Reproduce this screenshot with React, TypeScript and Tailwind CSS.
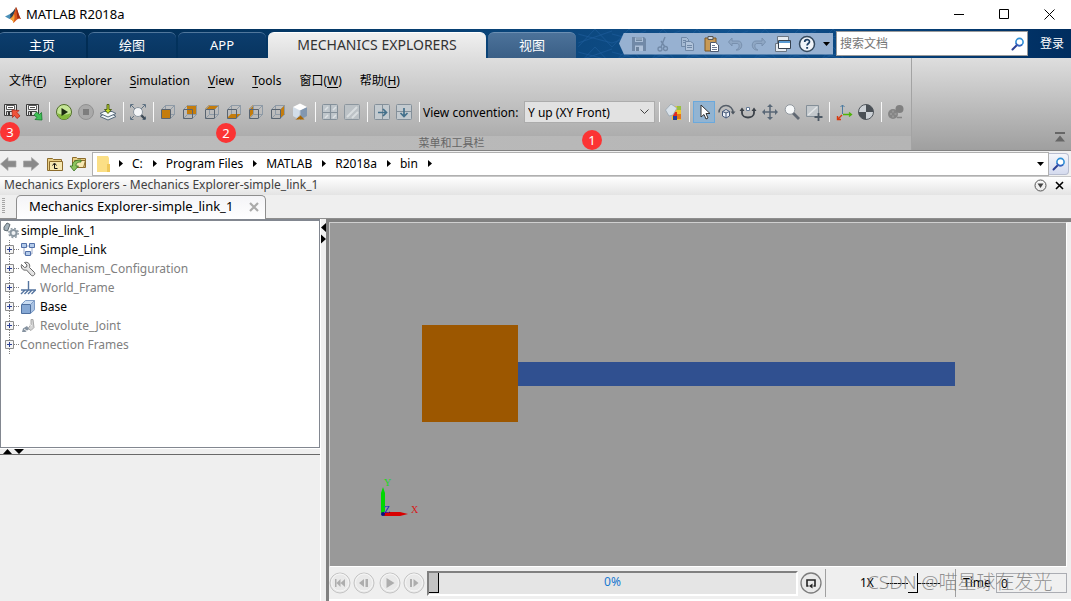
import React from "react";

type IconProps = { children: React.ReactNode; size?: number; className?: string };

function Icon({ children, size = 22, className = "" }: IconProps) {
  return (
    <svg width={size} height={size} viewBox={`0 0 ${size} ${size}`} fill="none" className={"block shrink-0 " + className} aria-hidden="true">
      {children}
    </svg>
  );
}

function Tool({ label, children, active = false, disabled = false }: { label: string; children: React.ReactNode; active?: boolean; disabled?: boolean }) {
  return (
    <button
      type="button"
      aria-label={label}
      disabled={disabled}
      className={"flex size-[22px] shrink-0 items-center justify-center " + (active ? "bg-[#92b4d2] outline outline-1 -outline-offset-1 outline-[#6ba9dc]" : "")}
    >
      <Icon>{children}</Icon>
    </button>
  );
}

function Sep() {
  return (
    <span className="flex h-5 w-2 shrink-0 justify-center">
      <span className="w-px bg-[#f8f8f8]" />
    </span>
  );
}

function Floppy() {
  return (
    <>
      <path d="M3.500 3.500h12v11h-12z" fill="#e9e9e9" stroke="#3c3c3c" />
      <path d="M5.500 4.500h8v4h-8z" fill="#fff" stroke="#555" />
      <path d="M7 6.500h5" stroke="#555" />
      <path d="M5.500 10.500h8v4h-8z" fill="#ddd" stroke="#444" />
      <path d="M7 11h2v3H7z" fill="#333" />
    </>
  );
}

const faces: { label: string; d: string }[] = [
  { label: "Front view", d: "M4 8h9v9H4z" },
  { label: "Back view", d: "M8 4h10v9H8z" },
  { label: "Top view", d: "M4 8l4-4h10l-4 4z" },
  { label: "Bottom view", d: "M4 17l4-4h10l-4 4z" },
  { label: "Left view", d: "M4 8l4-4v9l-4 4z" },
  { label: "Right view", d: "M14 8l4-4v9l-4 4z" },
];

function CubeFace({ d }: { d: string }) {
  return (
    <>
      <path d="M8.500 4.500h9v9h-9zM4.500 17.500l4-4M4.500 8.500l4-4M13.500 8.500l4-4M13.500 17.500l4-4" stroke="#8e9aa6" />
      <path d={d} fill="#c47c0c" />
      <path d="M4.500 8.500h9v9h-9z" stroke="#596470" />
      <path d="M4.500 8.500l4-4h9v9l-4 4" stroke="#8e9aa6" />
    </>
  );
}

function Magnifier() {
  return (
    <Icon size={14}>
      <path d="M6 8L1.500 12.500" stroke="#2b3f94" strokeWidth="2" strokeLinecap="round" />
      <circle cx="8.500" cy="5" r="3.600" fill="#fff" stroke="#2f8fd6" strokeWidth="1.600" />
      <path d="M5 6.200a3.600 3.600 0 0 0 6 1.500" stroke="#3b60bd" strokeWidth="1.600" />
    </Icon>
  );
}

function Menu({ text, hot, tail = "" }: { text?: string; hot: string; tail?: string }) {
  return (
    <button type="button" className="whitespace-nowrap">
      {text}
      <span className="underline underline-offset-2">{hot}</span>
      {tail}
    </button>
  );
}

function Badge({ n, className }: { n: number; className: string }) {
  return (
    <span className={"absolute flex size-5 items-center justify-center rounded-full bg-[#fb3434] text-[13px] leading-none text-white " + className}>{n}</span>
  );
}

function RibbonTab({ children, className }: { children: React.ReactNode; className: string }) {
  return (
    <button type="button" className={"h-[26px] rounded-t-md border-t pb-0.5 leading-5 " + className}>
      {children}
    </button>
  );
}

function TitleBar() {
  return (
    <header className="flex h-[29px] shrink-0 items-center bg-white text-[13px]">
      <svg width="18" height="18" viewBox="0 0 18 18" className="ml-1 block" aria-hidden="true">
        <path d="M1 10.500L6 8l2.500 2.500L5.500 13z" fill="#4a90b8" />
        <path d="M6 8l3-2.500L12 1l-2 9-4.500 3 1-2z" fill="#26445e" />
        <path d="M12 1c1.500 2 2.500 8 5 12-2-1-3-.5-4.500 1L9.500 17C9 14.500 8 13.500 6 13c3-2 4.500-7 6-12z" fill="#d8561c" />
        <path d="M12 1c1.500 2 2.500 8 5 12-1.500-1-2.500-.8-3.500 0C13 9 12.500 5 12 1z" fill="#9e2a14" />
        <path d="M10 8c1 2 .5 5-.5 9-.3-2-1.500-3.500-3.500-4 2-1 3-3 4-5z" fill="#f2a53c" />
      </svg>
      <h1 className="ml-1 flex-1">MATLAB R2018a</h1>
      <button type="button" aria-label="Minimize" className="flex w-[45px] justify-center">
        <svg width="11" height="11" viewBox="0 0 11 11"><path d="M0 5.500h10" stroke="#000" /></svg>
      </button>
      <button type="button" aria-label="Maximize" className="flex w-[45px] justify-center">
        <svg width="11" height="11" viewBox="0 0 11 11"><path d="M.5.5h9v9h-9z" stroke="#000" fill="none" /></svg>
      </button>
      <button type="button" aria-label="Close" className="-mr-px flex w-[45px] justify-center">
        <svg width="11" height="11" viewBox="0 0 11 11"><path d="M.5.5l10 10M10.500.5l-10 10" stroke="#000" /></svg>
      </button>
    </header>
  );
}

function QuickAccess() {
  return (
    <div className="flex h-[22px] items-center bg-[#97b1d1] pl-[9px] [clip-path:polygon(5px_0,100%_0,100%_100%,5px_100%,0_50%)]">
      <button type="button" aria-label="Save" className="w-6">
        <Icon>
          <path d="M4 4h12l2 2v12H4z" fill="#7189a7" />
          <path d="M7 4.500h8V9H7z" fill="#a9bdd6" /><path d="M8 6h6M8 7.500h6" stroke="#71879f" />
          <path d="M7 12.500h8V18H7z" fill="#adc0d8" /><path d="M8 14h3v4H8z" fill="#6d839d" />
        </Icon>
      </button>
      <button type="button" aria-label="Cut" className="w-6">
        <Icon>
          <path d="M13 4l-4 10M9 8l4 6" stroke="#7189a7" strokeWidth="1.400" />
          <circle cx="8" cy="16" r="2" stroke="#7189a7" strokeWidth="1.300" /><circle cx="13.500" cy="15.500" r="2" stroke="#7189a7" strokeWidth="1.300" />
        </Icon>
      </button>
      <button type="button" aria-label="Copy" className="w-6">
        <Icon>
          <path d="M5.500 4.500h5l2 2v7h-7z" fill="#a5bad3" stroke="#7189a7" /><path d="M9.500 8.500h5l3 2v7h-8z" fill="#b1c4db" stroke="#7189a7" />
          <path d="M11 12.500h5M11 14.500h5M7 7.500h3M7 9.500h2" stroke="#7189a7" />
        </Icon>
      </button>
      <button type="button" aria-label="Paste" className="w-6">
        <Icon>
          <path d="M5 5h11v13H5z" fill="#c99a55" stroke="#7a5626" /><path d="M8 3.500h5v3H8z" fill="#d7dbe0" stroke="#555" />
          <path d="M10.500 9.500h5l3 2.500v6.500h-8z" fill="#fff" stroke="#4d5a70" /><path d="M12 12.500h3M12 14.500h5M12 16.500h5" stroke="#6a7890" />
        </Icon>
      </button>
      <button type="button" aria-label="Undo" className="w-6">
        <Icon><path d="M8 5L4.500 9 8 13v-2.500h5c3 0 3 5.500-1 6.500h2c5-1 5-9 0-9H8z" fill="#8fa7c4" stroke="#7890ae" /></Icon>
      </button>
      <button type="button" aria-label="Redo" className="w-6">
        <Icon><path d="M14 5l3.500 4L14 13v-2.500H9c-3 0-3 5.500 1 6.500H8c-5-1-5-9 0-9h6z" fill="#8fa7c4" stroke="#7890ae" /></Icon>
      </button>
      <button type="button" aria-label="Switch windows" className="w-6">
        <Icon>
          <path d="M5.500 3.500h11v8h-11z" fill="#e6ebf1" stroke="#6b7683" />
          <path d="M3.500 10.500h11v8h-11z" fill="#e6ebf1" stroke="#6b7683" />
          <path d="M6.500 7.500h12v8h-12z" fill="#fff" stroke="#364250" /><path d="M7 8h11v2H7z" fill="#5a9ad2" />
        </Icon>
      </button>
      <button type="button" aria-label="Help" className="w-6">
        <Icon>
          <circle cx="11" cy="11" r="7.500" fill="#f0f4f9" stroke="#34495e" strokeWidth="1.500" />
          <path d="M8.700 9c0-3 4.800-3 4.800-.3 0 1.800-2.400 1.800-2.400 3.800" stroke="#1e3f63" strokeWidth="1.700" /><path d="M10.200 14h1.900v1.800h-1.900z" fill="#1e3f63" />
        </Icon>
      </button>
      <button type="button" aria-label="Customize" className="flex w-[13px] justify-center">
        <svg width="7" height="4" viewBox="0 0 7 4"><path d="M0 0h7L3.500 4z" fill="#000" /></svg>
      </button>
    </div>
  );
}

function Ribbon() {
  const dark = "w-[88px] border-[#51779c] bg-linear-to-b from-[#0c3d6d] to-[#083560] text-white";
  return (
    <nav className="relative flex h-[29px] shrink-0 items-end bg-linear-to-r from-[#00284d] via-[#11528f] via-70% to-[#002d5f]">
      <svg className="absolute inset-0 size-full" aria-hidden="true">
        <defs>
          <pattern id="mesh" width="34" height="18" patternUnits="userSpaceOnUse">
            <path d="M0 18L17 0l17 18M0 5l34 9M0 14L34 2" stroke="#1b5a9a" strokeWidth=".7" fill="none" />
          </pattern>
        </defs>
        <rect x="54%" width="25%" height="29" fill="url(#mesh)" />
      </svg>
      <div className="relative -ml-0.5 flex flex-1 items-end gap-0.5">
        <RibbonTab className={"text-[13px] " + dark}>主页</RibbonTab>
        <RibbonTab className={"text-[13px] " + dark}>绘图</RibbonTab>
        <RibbonTab className={"text-[13px] " + dark}>APP</RibbonTab>
        <RibbonTab className="w-[218px] border-white bg-linear-to-b from-[#f0f0f0] to-[#dedede] text-sm text-[#333]">MECHANICS EXPLORERS</RibbonTab>
        <RibbonTab className="w-[88px] border-[#6c8fb3] bg-linear-to-b from-[#4c729a] to-[#3a5f86] text-[13px] text-white">视图</RibbonTab>
      </div>
      <div className="relative flex h-full items-center gap-[3px]">
        <QuickAccess />
        <div className="flex h-[25px] w-48 items-center border border-[#9b9b9b] bg-white pr-0.5">
          <input type="search" aria-label="搜索文档" placeholder="搜索文档" className="w-full min-w-0 flex-1 bg-transparent pl-[3px] text-xs outline-none placeholder:text-[#757575]" />
          <button type="button" aria-label="搜索"><Magnifier /></button>
        </div>
        <button type="button" className="w-10 pl-0.5 text-xs text-white">登录</button>
      </div>
    </nav>
  );
}

function Toolbar() {
  return (
    <div className="flex h-[22px] items-center pl-px">
      <Tool label="Save configuration">
        <Floppy /><path d="M11 9l7 .5-2 2 3 3.500-3 2.500-2.500-3-2 2z" fill="#f0543a" stroke="#b3281a" strokeWidth=".8" />
      </Tool>
      <Tool label="Load configuration">
        <Floppy /><path d="M19 19l-7-.5 2-2-3-2.500 2.500-3 3 2.500 2-2z" fill="#3fbf55" stroke="#187a2c" strokeWidth=".8" />
      </Tool>
      <Sep />
      <Tool label="Run">
        <circle cx="11" cy="11" r="7.500" fill="#c5e596" stroke="#4f6d2a" /><path d="M4.500 12a6.500 6.500 0 0 0 13 0c-3 2-10 2-13 0z" fill="#83b93b" /><path d="M8.500 7l6.500 4-6.500 4z" fill="#1c2a10" />
      </Tool>
      <Tool label="Stop" disabled><circle cx="11" cy="11" r="7.500" fill="#a9a9a9" stroke="#919191" /><path d="M8 8h6v6H8z" fill="#7d7d7d" /></Tool>
      <Tool label="Update diagram">
        <path d="M3 15.500l3-2h10l3 2-8 3.500z" fill="#edf3f6" stroke="#56697a" /><path d="M3 12.500l4-2h8l4 2-8 3.500z" fill="#f5f9fb" stroke="#56697a" />
        <path d="M10 3.500h2v5h2.500L11 12.500 7.500 8.500H10z" fill="#c4da27" stroke="#50651a" />
      </Tool>
      <Sep />
      <Tool label="Fit to view">
        <path d="M3.500 6.500v-3h3M15.500 3.500h3v3M3.500 15.500v3h3M18.500 15.500v3h-3M4 4l4 4M18 4l-4 4M4 18l3-3" stroke="#5f7283" />
        <path d="M14 14l4 4" stroke="#3d4a55" strokeWidth="2.400" /><circle cx="11" cy="11" r="4.500" fill="#f4f6f8" stroke="#8b959e" />
      </Tool>
      <Sep />
      {faces.map((f) => (
        <Tool key={f.label} label={f.label}><CubeFace d={f.d} /></Tool>
      ))}
      <Tool label="Isometric view">
        <path d="M4 6l7 3v10l-7-4z" fill="#d2dde8" /><path d="M18 6l-7 3v10l7-4z" fill="#8297b0" /><path d="M4 6l7-3.500L18 6l-7 3.500z" fill="#fff" /><path d="M11 14l4.500 4.500h-9z" fill="#a86705" /><path d="M11 9.500v5l-4 3" stroke="#b9c6d4" />
      </Tool>
      <Sep />
      <Tool label="Four views"><rect x="3.500" y="3.500" width="15" height="15" rx="1" fill="#bfc6cb" stroke="#84909a" /><path d="M11.500 4v14M4 11.500h14" stroke="#84909a" strokeWidth="1.200" /><path d="M6 9l3-3M6 17l3-3M14 9l3-3M14 17l3-3" stroke="#dde2e5" strokeWidth="1.500" /></Tool>
      <Tool label="Single view"><rect x="3.500" y="3.500" width="15" height="15" rx="1" fill="#bcc2c6" stroke="#8c969e" /><path d="M6 16L16 6M11 17l6-6" stroke="#d8dddf" strokeWidth="2" /></Tool>
      <Sep />
      <Tool label="Split vertically"><rect x="3.500" y="3.500" width="15" height="15" rx="1" fill="#c3cacf" stroke="#84909a" /><path d="M11.500 4v14" stroke="#84909a" /><path d="M7 11.500h8M12 8l3.500 3.500L12 15" stroke="#43708b" strokeWidth="1.700" /></Tool>
      <Tool label="Split horizontally"><rect x="3.500" y="3.500" width="15" height="15" rx="1" fill="#c3cacf" stroke="#84909a" /><path d="M4 10.500h14" stroke="#84909a" /><path d="M11 7v8M7.500 12l3.500 3.500 3.500-3.500" stroke="#43708b" strokeWidth="1.700" /></Tool>
      <Sep />
      <label htmlFor="convention" className="w-[101px] pt-0.5 whitespace-nowrap">View convention:</label>
      <div className="relative h-[22px] w-[131px]">
        <select id="convention" defaultValue="y" className="h-full w-full appearance-none border border-[#acacac] bg-[#e2e2e2] pt-0.5 pl-[3px] text-xs">
          <option value="y">Y up (XY Front)</option>
          <option value="z">Z up (XY Top)</option>
        </select>
        <svg width="9" height="6" viewBox="0 0 9 6" className="pointer-events-none absolute top-2 right-1.5" aria-hidden="true"><path d="M.5.5l4 4 4-4" stroke="#404040" fill="none" /></svg>
      </div>
      <Sep />
      <Tool label="Background color">
        <path d="M12 5h6v14h-9v-6z" fill="#f0c530" /><path d="M14 5h4v4h-4z" fill="#9ac13c" /><path d="M10 11h4v4h-4z" fill="#e42b21" /><path d="M14 13h4v5h-4z" fill="#e5761a" /><path d="M10 15h4v4h-4z" fill="#263d9a" />
        <path d="M2.500 9L8 3l6 4-4 7-4 1z" fill="#d8e1e9" stroke="#98a4af" strokeWidth=".8" />
      </Tool>
      <Sep />
      <Tool label="Select" active><path d="M8 4v12l3-2.500 2 4.500 2-1-2-4.500h4z" fill="#fff" stroke="#333" /></Tool>
      <Tool label="Rotate">
        <path d="M4 11.500a7 7 0 0 1 14 0" stroke="#555e68" strokeWidth="1.500" /><path d="M15.500 10.500h5l-2.500 3z" fill="#4d5660" /><path d="M7.500 10.500l3.500-2 3.500 2v4.500L11 17l-3.500-2zM7.500 10.500L11 12l3.500-1.500M11 12v5" fill="#eef2f8" stroke="#44587a" />
      </Tool>
      <Tool label="Roll"><path d="M5 9v3c0 6 12 6 12 0V9" stroke="#3c4249" strokeWidth="1.800" /><path d="M2.500 10L5 6.500 7.500 10zM14.500 10L17 6.500l2.500 3.500z" fill="#3c4249" /><path d="M9.500 6.500h3v3h-3z" fill="#fff" stroke="#667b96" /></Tool>
      <Tool label="Pan"><path d="M11 4v14M4 11h14" stroke="#596776" strokeWidth="1.500" /><path d="M11 3L8 6h6zM11 19L8 16h6zM3 11l3-3v6zM19 11l-3-3v6z" fill="#596776" /></Tool>
      <Tool label="Zoom"><path d="M12 12l6 6" stroke="#606872" strokeWidth="2.800" /><circle cx="9" cy="8.500" r="4.800" fill="#f7f9fa" stroke="#90979e" /></Tool>
      <Tool label="Zoom region"><path d="M3.500 4.500h12v11h-12z" fill="#c4c9cd" stroke="#848f98" /><path d="M5 14l9-8" stroke="#e2e5e7" strokeWidth="1.500" /><path d="M15.500 12v8M11.500 16h8" stroke="#4d5965" strokeWidth="1.800" /></Tool>
      <Sep />
      <Tool label="Show frames"><path d="M9.500 13V4M7.500 6l2-2 2 2" stroke="#4d7ba0" /><path d="M10 13.500h8M16 11.500l2.500 2-2.500 2" stroke="#4eb20a" strokeWidth="1.300" /><path d="M9 14l-4 4M4.500 15v3.500H8" stroke="#d63a10" strokeWidth="1.400" /></Tool>
      <Tool label="Show centers of mass"><circle cx="11" cy="11" r="7.500" fill="#ccd1d6" stroke="#50565c" /><path d="M11 11V3.500A7.500 7.500 0 0 1 18.500 11zM11 11H3.500A7.500 7.500 0 0 0 11 18.500z" fill="#4a5056" /></Tool>
      <Sep />
      <Tool label="Record video" disabled><circle cx="8" cy="13" r="5" fill="#858585" /><circle cx="14.500" cy="8" r="4" fill="#808080" /><path d="M8 9.500v2M8 14.500v2M5 13h2M9.500 13h2" stroke="#a9a9a9" /><path d="M12 16.500h5" stroke="#858585" strokeWidth="1.500" /></Tool>
    </div>
  );
}

function ToolStrip() {
  return (
    <section className="relative flex h-[93px] shrink-0 border-b border-[#828282] bg-linear-to-b from-[#dedede] to-[#9f9f9f]">
      <div className="flex w-[912px] shrink-0 flex-col border-r border-[#a3a3a3]">
        <div className="flex flex-1 flex-col bg-linear-to-b from-[#dedede] to-[#adadad]">
          <div className="flex h-[43px] items-center gap-[18px] pt-0.5 pl-[9px]">
            <Menu text="文件(" hot="F" tail=")" />
            <Menu hot="E" tail="xplorer" />
            <Menu hot="S" tail="imulation" />
            <Menu hot="V" tail="iew" />
            <Menu hot="T" tail="ools" />
            <Menu text="窗口(" hot="W" tail=")" />
            <Menu text="帮助(" hot="H" tail=")" />
          </div>
          <Toolbar />
        </div>
        <div className="h-[14px] bg-linear-to-r from-[#bdbdbd] to-[#b5b5b5] pr-2 text-center text-[11px] leading-[13px] text-[#666]">菜单和工具栏</div>
      </div>
      <div className="flex flex-1 items-end justify-end">
        <button type="button" aria-label="Collapse" className="mr-1.5 mb-2">
          <svg width="10" height="10" viewBox="0 0 10 10"><path d="M0 0h10v2H0zM5 3.500l5 6H0z" fill="#666" /></svg>
        </button>
      </div>
      <Badge n={3} className="top-[64px] left-0" />
      <Badge n={2} className="top-[65px] left-[216px]" />
      <Badge n={1} className="top-[72px] left-[582px]" />
    </section>
  );
}

const crumbs = ["C:", "Program Files", "MATLAB", "R2018a", "bin"];

function Caret() {
  return <svg width="4" height="7" viewBox="0 0 4 7" className="shrink-0" aria-hidden="true"><path d="M0 0l4 3.500L0 7z" fill="#000" /></svg>;
}

function AddressBar() {
  return (
    <div className="flex h-[25px] shrink-0 items-center bg-[#f0f0f0]">
      <button type="button" aria-label="Back" className="w-[23px]">
        <svg width="17" height="16" viewBox="0 0 17 16"><path d="M.5 8L8 1.500V5h8v6H8v3.500z" fill="#8a8a8a" stroke="#a6a6a6" strokeWidth=".7" /></svg>
      </button>
      <button type="button" aria-label="Forward" className="w-6">
        <svg width="17" height="16" viewBox="0 0 17 16"><path d="M16 8L8.500 1.500V5h-8v6h8v3.500z" fill="#8a8a8a" stroke="#a6a6a6" strokeWidth=".7" /></svg>
      </button>
      <button type="button" aria-label="Up one level" className="w-[22px]">
        <svg width="16" height="16" viewBox="0 0 16 16"><path d="M.5 2.500h5l1 1h8v11H.5z" fill="#e9cf86" stroke="#8c6c2c" /><path d="M2.500 5.500h13v9h-13z" fill="#f7e8b2" stroke="#8c6c2c" /><path d="M7.500 12.500V8M5.500 9.500l2-2.500 2 2.500M7.500 12.500h3" stroke="#111" fill="none" /></svg>
      </button>
      <button type="button" aria-label="Browse for folder" className="w-[23px]">
        <svg width="18" height="16" viewBox="0 0 18 16"><path d="M3.500 1.500h4l1 1h8v9h-13z" fill="#e9cf86" stroke="#8c6c2c" /><path d="M5.500 4.500h11l-2 7h-9z" fill="#f7e8b2" stroke="#8c6c2c" /><path d="M12 6c-4 0-5 1.500-5 4h2.500L5 15l-4-5h2.500C3 6 6 4 12 4z" fill="#8cc45e" stroke="#33701e" strokeWidth=".8" /></svg>
      </button>
      <div className="flex h-6 flex-1 items-center border border-[#b0b0b0] bg-white pl-1">
        <svg width="13" height="16" viewBox="0 0 13 16" className="mr-[9px]" aria-hidden="true"><path d="M0 0h11l1 2v14H0z" fill="#fbdf85" /><path d="M10 8h3v8h-3z" fill="#efc85a" /></svg>
        <Caret />
        {crumbs.map((c) => (
          <React.Fragment key={c}>
            <a href="#" className="mr-2.5 ml-[9px] whitespace-nowrap">{c}</a>
            <Caret />
          </React.Fragment>
        ))}
        <button type="button" aria-label="Recent folders" className="mr-1 ml-auto">
          <svg width="7" height="4" viewBox="0 0 7 4"><path d="M0 0h7L3.500 4z" fill="#000" /></svg>
        </button>
      </div>
      <button type="button" aria-label="Search folder" className="mr-0.5 flex h-[22px] w-5 items-center justify-center rounded-r-sm border border-l-0 border-[#b7bdd0] bg-linear-to-b from-[#f4f6fb] to-[#d5dbee]"><Magnifier /></button>
    </div>
  );
}

function Expander() {
  return (
    <svg width="20" height="19" viewBox="0 0 20 19" className="block shrink-0" aria-hidden="true">
      <path d="M9.500 0v19M10 9.500h10" stroke="#808080" strokeDasharray="1 1" />
      <path d="M5.500 5.500h8v8h-8z" fill="#f4f4f4" stroke="#8c8c8c" />
      <path d="M7 9.500h5M9.500 7v5" stroke="#2b3f94" />
    </svg>
  );
}

const nodes: { label: string; dim: boolean; icon?: React.ReactNode }[] = [
  { label: "Simple_Link", dim: false, icon: <><path d="M4 6v6h3M12 5v7H8M6 4h5" stroke="#9aa9c8" /><path d="M1.500 1.500h5v4h-5zM9.500 1.500h5v4h-5zM5.500 9.500h5v4h-5z" fill="#b4cbea" stroke="#5270a8" /></> },
  { label: "Mechanism_Configuration", dim: true, icon: <path d="M1.500 3.500l3 3 2-.5.5-2L4.500 1.500C8 .5 10.500 3 9.500 6.500l5 5c1 2-1 4-3 3l-5-5.500C3 10 .5 7 1.500 3.500z" fill="#e4e4e4" stroke="#666" /> },
  { label: "World_Frame", dim: true, icon: <path d="M8.500 1v9M1 10h15M5 10l-4 4M8.500 10l-4 4M12 10l-4 4M15.500 10l-4 4" stroke="#54749f" strokeWidth="1.400" /> },
  { label: "Base", dim: false, icon: <><path d="M1 5l4-3.500h10L11 5z" fill="#c9dcf2" /><path d="M11 5l4-3.500V11l-4 3.500z" fill="#a9c2e2" /><path d="M1.500 5.500h9v9h-9z" fill="#86a8d4" stroke="#4f70a0" /><path d="M1.500 5.500l4-4h9v9l-4 4M10.500 5.500l4-4" stroke="#7f9cc6" /></> },
  { label: "Revolute_Joint", dim: true, icon: <><path d="M11 1.500h2l1 8-3 3-3-2 3-4z" fill="#d5d5d5" stroke="#a8a8a8" /><path d="M2 14l1-3.500L7 8l2 3-3.500 3z" fill="#8592a0" /><path d="M4 11l3 2M9 6l3 2" stroke="#f0f0f0" /></> },
  { label: "Connection Frames", dim: true },
];

function Tree() {
  return (
    <div className="min-h-0 overflow-hidden border border-t-2 border-[#828790] bg-white">
      <ul>
        <li className="flex h-[19px] items-center">
          <Icon size={17} className="ml-0.5">
            <path d="M1 5l3-4 3 1.500L4.500 9 1 8z" fill="#a4b2bb" stroke="#5c6870" /><circle cx="10.500" cy="11" r="3" stroke="#8c98a2" strokeWidth="2" fill="#f0f2f4" /><circle cx="10.500" cy="11" r="4.700" stroke="#8c98a2" strokeWidth="1.400" strokeDasharray="1.900 1.800" />
          </Icon>
          <span className="ml-px">simple_link_1</span>
        </li>
        {nodes.map((n) => (
          <li key={n.label} className="-ml-px flex h-[19px] items-center">
            <button type="button" aria-label={"Expand " + n.label}><Expander /></button>
            {n.icon && <Icon size={16} className="mr-1">{n.icon}</Icon>}
            <span className={n.dim ? "text-[#808080]" : ""}>{n.label}</span>
          </li>
        ))}
      </ul>
    </div>
  );
}

function Scene() {
  return (
    <svg className="block size-full" viewBox="0 0 736 343" preserveAspectRatio="xMidYMid meet" role="img" aria-label="Mechanism front view">
      <rect x="92" y="102" width="96" height="97" fill="#9c5700" />
      <rect x="188" y="139" width="437" height="24" fill="#305090" />
      <path d="M51 290V270l2-6 2 6v20z" fill="#00d800" />
      <path d="M54 289h16l8 2-8 2H54z" fill="#d80000" />
      <circle cx="53" cy="291" r="2" fill="#0a1080" />
      <g fontFamily="Liberation Serif, serif" fontSize="10">
        <text x="54" y="263" fill="#18d818">Y</text>
        <text x="81" y="290" fill="#d81818">X</text>
        <text x="54" y="290" fill="#2020c8">Z</text>
      </g>
    </svg>
  );
}

function Round({ label, d }: { label: string; d: string }) {
  return (
    <button type="button" aria-label={label} className="shrink-0">
      <Icon size={22}><circle cx="11" cy="11" r="10" fill="#e9e9e9" stroke="#c4c4c4" /><circle cx="11" cy="10.500" r="8.500" stroke="#f6f6f6" /><path d={d} fill="#adadad" /></Icon>
    </button>
  );
}

function Player() {
  return (
    <div className="flex h-[34px] shrink-0 items-center border-b-2 border-white">
      <div className="flex shrink-0 items-center">
        <Round label="Go to start" d="M6 7h1.500v8H6zM11.500 7v8L7.500 11zM16 7v8l-4.500-4z" />
        <span className="w-0.5" />
        <Round label="Step back" d="M6 11l5-4v8zM12.500 7H15v8h-2.500z" />
        <span className="w-1" />
        <Round label="Play" d="M7.500 6l8 5-8 5z" />
        <span className="w-0.5" />
        <Round label="Step forward" d="M7 7h2v8H7zM10.500 7l5 4-5 4z" />
      </div>
      <div className="relative ml-0.5 h-[25px] flex-1 border-2 border-t-[#808080] border-r-white border-b-white border-l-[#808080] bg-[#e5e5e5]">
        <input type="range" aria-label="Progress" min={0} max={100} defaultValue={0} className="block h-full w-full appearance-none bg-transparent [&::-webkit-slider-thumb]:h-5 [&::-webkit-slider-thumb]:w-[10px] [&::-webkit-slider-thumb]:appearance-none [&::-webkit-slider-thumb]:border-r [&::-webkit-slider-thumb]:border-b [&::-webkit-slider-thumb]:border-black [&::-webkit-slider-thumb]:bg-[#c3c3c3]" />
        <span className="pointer-events-none absolute inset-0 text-center leading-[18px] text-[#1878d0]">0%</span>
      </div>
      <button type="button" aria-label="Loop" className="ml-0.5 shrink-0">
        <Icon size={22}><circle cx="11" cy="11" r="10" fill="#e9e9e9" stroke="#7c7c7c" strokeWidth="1.300" /><path d="M8.500 14H7V8h8v6h-1.500" stroke="#222" strokeWidth="1.600" /><path d="M12.500 11.500v5l-3.500-2.500z" fill="#222" /></Icon>
      </button>
      <span className="mx-[3px] h-7 w-px bg-[#a0a0a0]" />
      <div className="relative flex h-full w-[242px] shrink-0 items-center">
        <label htmlFor="speed" className="ml-[31px] w-[26px]">1X</label>
        <input id="speed" type="range" defaultValue={50} className="h-5 w-[54px] appearance-none bg-transparent [&::-webkit-slider-runnable-track]:h-5 [&::-webkit-slider-runnable-track]:bg-[repeating-linear-gradient(90deg,#111_0_3px,#888_3px_4px)] [&::-webkit-slider-runnable-track]:bg-[length:100%_1px] [&::-webkit-slider-runnable-track]:bg-center [&::-webkit-slider-runnable-track]:bg-no-repeat [&::-webkit-slider-thumb]:h-5 [&::-webkit-slider-thumb]:w-[10px] [&::-webkit-slider-thumb]:appearance-none [&::-webkit-slider-thumb]:border-r [&::-webkit-slider-thumb]:border-b [&::-webkit-slider-thumb]:border-black [&::-webkit-slider-thumb]:bg-[#efefef]" />
        <span className="mr-[7px] ml-[15px] h-7 w-px bg-[#a0a0a0]" />
        <label htmlFor="time" className="w-[33px]">Time</label>
        <input id="time" readOnly defaultValue="0" className="h-5 w-[71px] border border-[#abadb3] bg-[#f0f0f0] pl-1 text-xs" />
        <span className="pointer-events-none absolute top-0 left-[38px] text-[19px] leading-[30px] font-light whitespace-nowrap text-[#777]/80">CSDN @喵星球在发光</span>
      </div>
    </div>
  );
}

export default function App() {
  return (
    <div className="flex h-screen flex-col overflow-hidden bg-[#efefef] font-['Noto_Sans','Noto_Sans_CJK_SC',sans-serif] text-xs text-black">
      <TitleBar />
      <Ribbon />
      <ToolStrip />
      <AddressBar />
      <div className="flex h-[19px] shrink-0 items-center border-t border-[#c8c8c8] bg-linear-to-b from-white to-[#e4e4e4] px-1 pb-0.5 text-[#404040]">
        <h2 className="flex-1">Mechanics Explorers - Mechanics Explorer-simple_link_1</h2>
        <button type="button" aria-label="Panel actions" className="mr-2">
          <Icon size={13}><circle cx="6.500" cy="6.500" r="5.500" stroke="#555" /><path d="M3.500 4.500h6l-3 4.500z" fill="#444" /></Icon>
        </button>
        <button type="button" aria-label="Close panel" className="mr-[3px]">
          <svg width="9" height="9" viewBox="0 0 9 9"><path d="M1 1l7 7M8 1L1 8" stroke="#000" strokeWidth="1.600" /></svg>
        </button>
      </div>
      <div className="flex h-6 shrink-0 items-end border-b border-[#8e8e8e]">
        <svg width="16" height="20" viewBox="0 0 16 20" aria-hidden="true"><path d="M3.500 0v16" stroke="#a5a5a5" strokeWidth="3" strokeDasharray="1 1" /></svg>
        <div className="-mb-px flex h-6 w-[250px] items-center justify-between rounded-t-[5px] border border-b-0 border-[#8e8e8e] bg-linear-to-b from-[#f4f4f7] to-white pr-1.5 pb-0.5 pl-3 text-[13px]">
          <span>Mechanics Explorer-simple_link_1</span>
          <button type="button" aria-label="Close tab">
            <svg width="10" height="10" viewBox="0 0 10 10"><path d="M1 1l8 8M9 1L1 9" stroke="#aaa" strokeWidth="2.200" /></svg>
          </button>
        </div>
      </div>
      <main className="flex min-h-0 flex-1">
        <aside className="grid w-[320px] shrink-0 grid-rows-[3fr_2fr]">
          <Tree />
          <div className="border-t border-white">
            <div className="flex h-1.5 items-end border-b border-[#696969] pl-[3px]">
              <svg width="21" height="5" viewBox="0 0 21 5" aria-hidden="true"><path d="M0 5l4.500-5L9 5zM11 0h10l-5 5z" fill="#000" /></svg>
            </div>
          </div>
        </aside>
        <div className="w-1.5 shrink-0 border-l border-white pt-1">
          <svg width="5" height="21" viewBox="0 0 5 21" aria-hidden="true"><path d="M5 0v9L0 4.500zM0 11.500v9L5 16z" fill="#000" /></svg>
        </div>
        <section className="flex min-w-0 flex-1 flex-col border-t-3 border-l-3 border-[#808080]">
          <div className="mr-1 min-h-0 flex-1 border border-t-[#d0d0d0] border-r-white border-b-white border-l-[#d0d0d0] bg-[#999]">
            <Scene />
          </div>
          <Player />
        </section>
      </main>
    </div>
  );
}
